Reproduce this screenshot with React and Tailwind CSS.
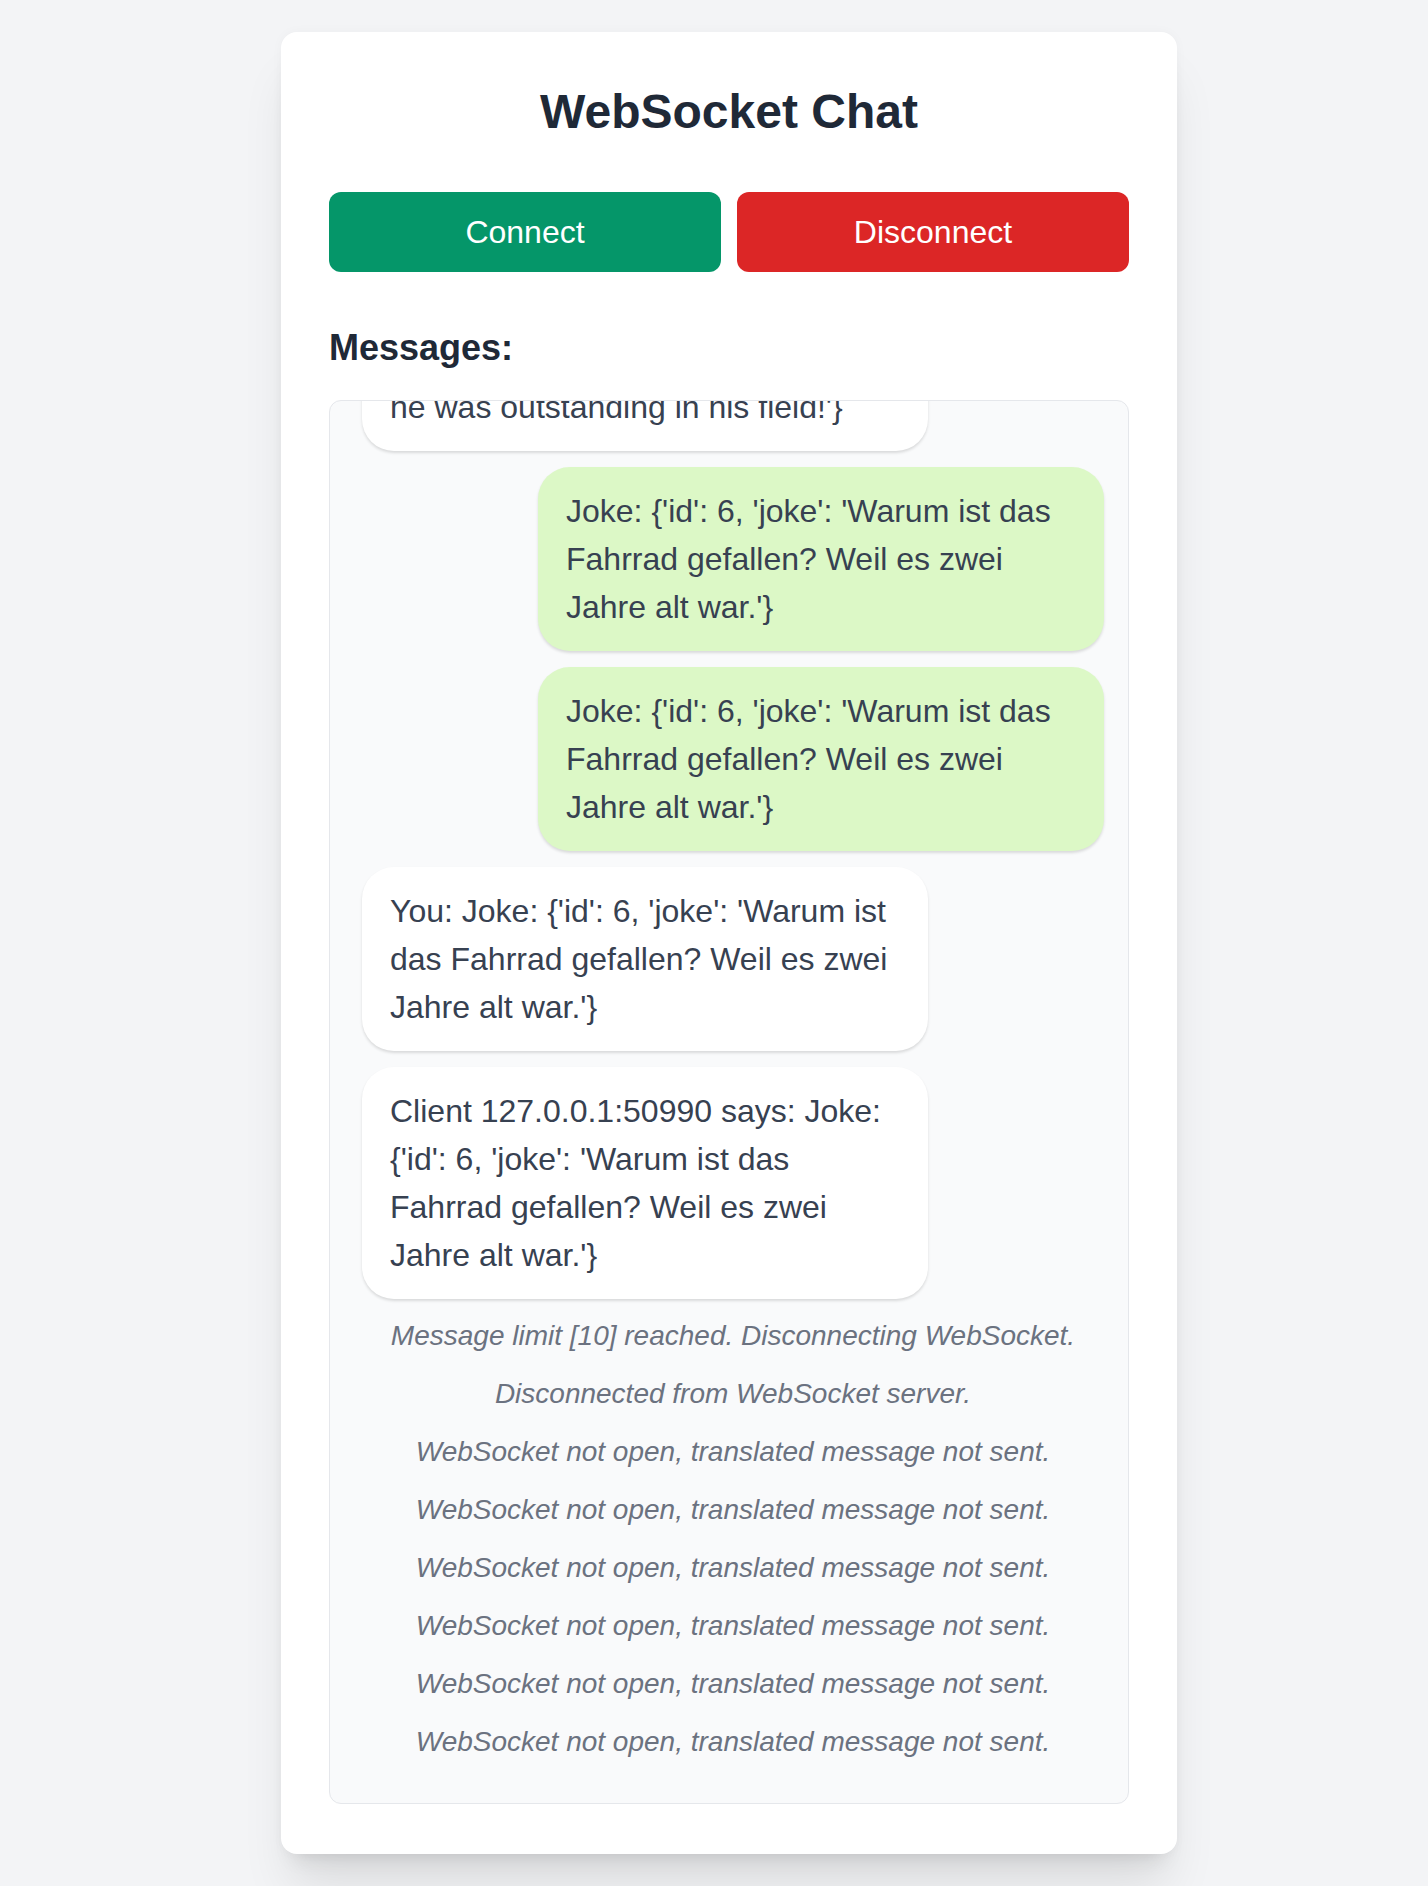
import React from "react";

const messages = [
  {
    type: "received",
    text: "Client 127.0.0.1:50990 says: Joke: {'id': 3, 'joke': 'Was ist orange und läuft durch den Wald? Eine Wanderine.'}",
  },
  {
    type: "received",
    text: "Joke: {'id': 4, 'joke': 'Why did the scarecrow win an award? Because he was outstanding in his field!'}",
  },
  {
    type: "sent",
    text: "Joke: {'id': 6, 'joke': 'Warum ist das Fahrrad gefallen? Weil es zwei Jahre alt war.'}",
  },
  {
    type: "sent",
    text: "Joke: {'id': 6, 'joke': 'Warum ist das Fahrrad gefallen? Weil es zwei Jahre alt war.'}",
  },
  {
    type: "received",
    text: "You: Joke: {'id': 6, 'joke': 'Warum ist das Fahrrad gefallen? Weil es zwei Jahre alt war.'}",
  },
  {
    type: "received",
    text: "Client 127.0.0.1:50990 says: Joke: {'id': 6, 'joke': 'Warum ist das Fahrrad gefallen? Weil es zwei Jahre alt war.'}",
  },
  { type: "system", text: "Message limit [10] reached. Disconnecting WebSocket." },
  { type: "system", text: "Disconnected from WebSocket server." },
  { type: "system", text: "WebSocket not open, translated message not sent." },
  { type: "system", text: "WebSocket not open, translated message not sent." },
  { type: "system", text: "WebSocket not open, translated message not sent." },
  { type: "system", text: "WebSocket not open, translated message not sent." },
  { type: "system", text: "WebSocket not open, translated message not sent." },
  { type: "system", text: "WebSocket not open, translated message not sent." },
];

const Message = ({ msg }) => {
  if (msg.type === "system") {
    return (
      <div className="shrink-0 mb-[16px] text-center italic text-[28px] leading-[42px] text-[#6b7280]">
        {msg.text}
      </div>
    );
  }

  const bubble =
    msg.type === "sent"
      ? "ml-auto bg-[#dcf8c6]"
      : "bg-white";

  return (
    <div
      className={`shrink-0 mb-[16px] w-[566px] px-[28px] py-[20px] rounded-[32px] text-[32px] leading-[48px] text-[#374151] shadow-[0_2px_3px_rgba(0,0,0,0.13)] ${bubble}`}
    >
      {msg.text}
    </div>
  );
};

const App = () => {
  return (
    <div
      className="min-h-screen bg-[#f3f4f6] flex justify-center pl-[30px] py-[32px]"
      style={{ fontFamily: '"Liberation Sans", Arial, sans-serif' }}
    >
      <div className="w-[896px] bg-white rounded-[16px] p-[48px] shadow-[0_40px_50px_-10px_rgba(0,0,0,0.1),0_16px_20px_-12px_rgba(0,0,0,0.1),0_0_12px_rgba(0,0,0,0.03)]">
        <h1 className="text-center text-[48px] leading-[64px] font-bold text-[#1f2937] mb-[48px]">
          WebSocket Chat
        </h1>

        <div className="flex gap-[16px] mb-[48px]">
          <button className="flex-1 h-[80px] rounded-[12px] bg-[#059669] text-white text-[32px]">
            Connect
          </button>
          <button className="flex-1 h-[80px] rounded-[12px] bg-[#dc2626] text-white text-[32px]">
            Disconnect
          </button>
        </div>

        <h2 className="text-[36px] leading-[56px] font-bold text-[#1f2937] mb-[24px]">
          Messages:
        </h2>

        {/* scrolled to the bottom, older messages clip at the top */}
        <div className="h-[1404px] overflow-hidden flex flex-col justify-end border border-[#e5e7eb] rounded-[12px] bg-[#f9fafb] pl-[32px] pr-[24px] py-[24px]">
          {messages.map((msg, index) => (
            <Message key={index} msg={msg} />
          ))}
        </div>
      </div>
    </div>
  );
};

export default App;
